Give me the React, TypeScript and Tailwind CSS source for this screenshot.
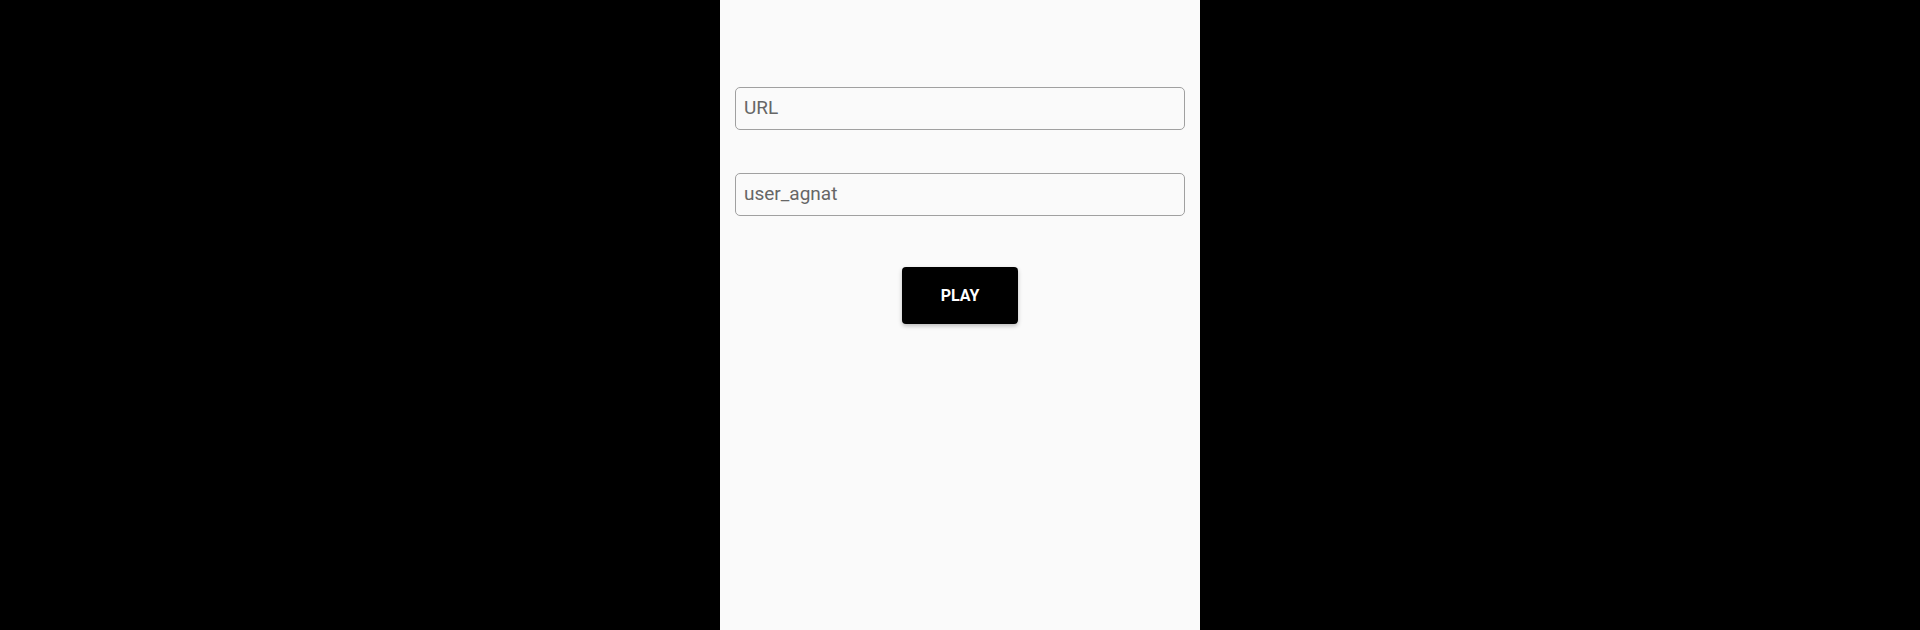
export default function App() {
    return (
        <div className="flex h-[630px] w-full justify-center bg-black font-['Roboto',sans-serif]">
            <div className="flex w-[480px] flex-col bg-[#fafafa] px-[15px] pt-[87px]">
                {/* URL field */}
                <input
                    readOnly
                    placeholder="URL"
                    className="h-[43px] w-full rounded-[5px] border border-[#a0a0a0] bg-transparent px-2 pb-[3px] text-[19px] text-[#666] outline-none placeholder:text-[#666]"
                />
                {/* Username field */}
                <input
                    readOnly
                    value="user_agnat"
                    className="mt-[43px] h-[43px] w-full rounded-[5px] border border-[#a0a0a0] bg-transparent px-2 pb-[3px] text-[19px] text-[#666] outline-none"
                />
                <button className="mx-auto mt-[51px] h-[57px] w-[116px] rounded-[4px] bg-black text-[16px] font-bold text-white shadow-[0_2px_4px_rgba(0,0,0,0.25)]">
                    PLAY
                </button>
            </div>
        </div>
    );
}
